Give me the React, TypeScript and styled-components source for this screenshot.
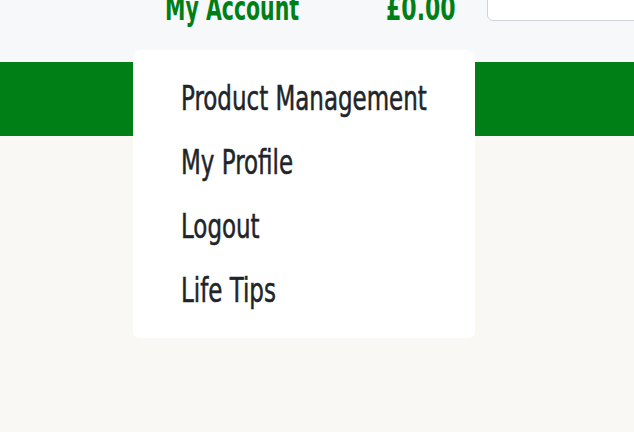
import React from "react";
import styled, { createGlobalStyle } from "styled-components";

const Global = createGlobalStyle`
  html, body { margin: 0; padding: 0; }
  body {
    background: #f9f8f4;
    font-family: "DejaVu Sans Condensed", "DejaVu Sans", "Liberation Sans", sans-serif;
    font-stretch: condensed;
  }
`;

const Page = styled.div`
  position: relative;
  width: 634px;
  height: 432px;
  overflow: hidden;
  background: #f9f8f4;
`;

const Header = styled.header`
  height: 62px;
  background: #f7f8fa;
  overflow: hidden;
`;

const HeaderRow = styled.div`
  display: flex;
  align-items: flex-end;
  height: 20px;
  padding-left: 165px;
`;

const NavLink = styled.a<{ $width: number; $gap: number }>`
  display: block;
  width: ${(p) => p.$width}px;
  margin-right: ${(p) => p.$gap}px;
  color: #007f16;
  font-size: 34px;
  font-weight: 700;
  line-height: 24px;
  text-decoration: none;
  white-space: nowrap;
`;

const Narrow = styled.span<{ $scale: number }>`
  display: inline-block;
  transform: scaleX(${(p) => p.$scale});
  transform-origin: left center;
`;

const Search = styled.div`
  flex: 1;
  height: 40px;
  margin-bottom: -1px;
  background: #fff;
  border: 1.5px solid #cfd3da;
  border-radius: 6px;
  margin-right: -20px;
`;

const GreenBar = styled.div`
  height: 74px;
  background: #007f16;
`;

const Menu = styled.ul`
  position: absolute;
  left: 133px;
  top: 50px;
  width: 342px;
  margin: 0;
  padding: 16px 0;
  list-style: none;
  background: #fff;
  border-radius: 7px;
  box-sizing: border-box;
`;

const MenuItem = styled.li`
  height: 64px;
  display: flex;
  align-items: center;
  padding-left: 48px;
  font-size: 33px;
  color: #212529;
  -webkit-text-stroke: 0.5px #212529;
  white-space: nowrap;
`;

const items = ["Product Management", "My Profile", "Logout", "Life Tips"];

export default function App() {
  return (
    <Page>
      <Global />
      <Header>
        <HeaderRow>
          <NavLink $width={134} $gap={87}>
            <Narrow $scale={0.67}>My Account</Narrow>
          </NavLink>
          <NavLink $width={68} $gap={33}>
            <Narrow $scale={0.72}>£0.00</Narrow>
          </NavLink>
          <Search />
        </HeaderRow>
      </Header>
      <GreenBar />
      <Menu>
        {items.map((t) => (
          <MenuItem key={t}>
            <Narrow $scale={0.774}>{t}</Narrow>
          </MenuItem>
        ))}
      </Menu>
    </Page>
  );
}
